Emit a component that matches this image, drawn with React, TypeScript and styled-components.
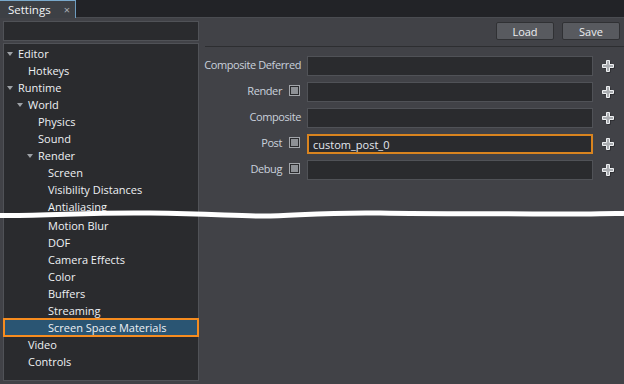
import React from "react";
import styled, { createGlobalStyle } from "styled-components";

const GlobalStyle = createGlobalStyle`
  html, body {
    margin: 0;
    padding: 0;
    background: #414247;
  }
  body {
    font-family: "Open Sans", "Noto Sans", "Liberation Sans", sans-serif;
    font-size: 11px;
    color: #e6e9ee;
  }
`;

type TreeItem = {
  label: string;
  level: number;
  open?: boolean;
  selected?: boolean;
  shifted?: boolean;
};

const tree: TreeItem[] = [
  { label: "Editor", level: 0, open: true },
  { label: "Hotkeys", level: 1 },
  { label: "Runtime", level: 0, open: true },
  { label: "World", level: 1, open: true },
  { label: "Physics", level: 2 },
  { label: "Sound", level: 2 },
  { label: "Render", level: 2, open: true },
  { label: "Screen", level: 3 },
  { label: "Visibility Distances", level: 3 },
  { label: "Antialiasing", level: 3 },
  { label: "Motion Blur", level: 3, shifted: true },
  { label: "DOF", level: 3 },
  { label: "Camera Effects", level: 3 },
  { label: "Color", level: 3 },
  { label: "Buffers", level: 3 },
  { label: "Streaming", level: 3 },
  { label: "Screen Space Materials", level: 3, selected: true },
  { label: "Video", level: 1 },
  { label: "Controls", level: 1 },
];

const fields = [
  { label: "Composite Deferred", check: false, value: "" },
  { label: "Render", check: true, value: "" },
  { label: "Composite", check: false, value: "" },
  { label: "Post", check: true, value: "custom_post_0", active: true },
  { label: "Debug", check: true, value: "" },
];

const Window = styled.div`
  position: relative;
  width: 624px;
  height: 384px;
  overflow: hidden;
  display: flex;
  flex-direction: column;
  background: #414247;
`;

const TabBar = styled.div`
  height: 17px;
  flex: none;
  display: flex;
  background: #222327;
  border-bottom: 1px solid #4a4c51;
`;

const Tab = styled.div`
  width: 76px;
  height: 18px;
  margin-bottom: -1px;
  box-sizing: border-box;
  padding: 0 0 0 8px;
  display: flex;
  align-items: center;
  justify-content: space-between;
  background: #3d4045;
  border-top: 1px solid #79a9cc;
  border-right: 1px solid #6d9cbf;
  color: #f2f4f7;
  font-size: 11.5px;
`;

const Close = styled.span`
  width: 16px;
  text-align: center;
  color: #a9adb3;
  font-size: 11px;
`;

const Body = styled.div`
  flex: 1;
  display: flex;
  min-height: 0;
`;

const Sidebar = styled.div`
  width: 200px;
  flex: none;
  box-sizing: border-box;
  padding: 3px 1px 3px 3px;
  display: flex;
  flex-direction: column;
  gap: 2px;
`;

const Search = styled.div`
  height: 20px;
  flex: none;
  box-sizing: border-box;
  background: #2a2b2e;
  border: 1px solid #505257;
`;

const Tree = styled.div`
  flex: 1;
  box-sizing: border-box;
  background: #2a2b2e;
  border: 1px solid #505257;
  padding-top: 1px;
`;

const Row = styled.div<{ $level: number; $selected?: boolean; $shifted?: boolean }>`
  height: 17px;
  display: flex;
  align-items: center;
  padding-left: ${(p) => 3 + p.$level * 10}px;
  margin-top: ${(p) => (p.$shifted ? 2 : 0)}px;
  color: #eef1f4;
  white-space: nowrap;
  background: ${(p) => (p.$selected ? "#2a5573" : "transparent")};
  outline: ${(p) => (p.$selected ? "2px solid #f68c1f" : "none")};
  outline-offset: -1px;
`;

const Toggle = styled.span<{ $open?: boolean }>`
  width: 11px;
  flex: none;
  display: flex;
  align-items: center;

  &::before {
    content: "";
    display: ${(p) => (p.$open ? "block" : "none")};
    width: 0;
    height: 0;
    border-left: 3px solid transparent;
    border-right: 3px solid transparent;
    border-top: 4px solid #9da1a6;
  }
`;

const Main = styled.div`
  flex: 1;
  display: flex;
  flex-direction: column;
  padding-left: 5px;
`;

const Toolbar = styled.div`
  display: flex;
  justify-content: flex-end;
  gap: 8px;
  padding: 4px 4px 6px 0;
  border-bottom: 1px solid #2d2e31;
`;

const Button = styled.button`
  width: 58px;
  height: 18px;
  padding: 0;
  border: 1px solid #303134;
  border-radius: 2px;
  background: #585a5f;
  color: #eceef1;
  font-family: inherit;
  font-size: 11px;
`;

const Form = styled.div`
  display: flex;
  flex-direction: column;
  gap: 6px;
  padding: 9px 9px 0 0;
`;

const Field = styled.div`
  display: flex;
  height: 20px;
`;

const Label = styled.div`
  width: 96px;
  margin-right: 6px;
  display: flex;
  justify-content: flex-end;
  align-items: flex-start;
  gap: 7px;
  line-height: 17px;
  letter-spacing: -0.4px;
  color: #c9d1dc;
  white-space: nowrap;
`;

const Check = styled.span`
  position: relative;
  flex: none;
  width: 11px;
  height: 11px;
  box-sizing: border-box;
  margin: 3px 1px 0 0;
  border: 1px solid #a2a5aa;
  background: #2a2b2e;

  &::after {
    content: "";
    position: absolute;
    inset: 1px;
    background: #8e9196;
  }
`;

const Input = styled.div<{ $active?: boolean }>`
  flex: 1;
  box-sizing: border-box;
  display: flex;
  align-items: center;
  padding-left: 4px;
  background: #2a2b2e;
  border: ${(p) => (p.$active ? "2px solid #d9841f" : "1px solid #505257")};
  color: #e4e8ee;
`;

const PlusSlot = styled.div`
  width: 22px;
  display: flex;
  justify-content: flex-end;
  align-items: center;
`;

const Break = styled.svg`
  position: absolute;
  left: 0;
  top: 204px;
  pointer-events: none;
`;

const Plus = () => (
  <svg width="13" height="13" viewBox="0 0 13 13">
    <path d="M5.5 1.5h3v4h4v3h-4v4h-3v-4h-4v-3h4z" fill="#1c1d20" />
    <path
      d="M4.5 0.5h3v4h4v3h-4v4h-3v-4h-4v-3h4z"
      fill="#a9acb0"
      stroke="#eef0f2"
      strokeWidth="1"
    />
  </svg>
);

export default function App() {
  return (
    <>
      <GlobalStyle />
      <Window>
        <TabBar>
          <Tab>
            Settings<Close>×</Close>
          </Tab>
        </TabBar>
        <Body>
          <Sidebar>
            <Search />
            <Tree>
              {tree.map((t) => (
                <Row key={t.label} $level={t.level} $selected={t.selected} $shifted={t.shifted}>
                  <Toggle $open={t.open} />
                  {t.label}
                </Row>
              ))}
            </Tree>
          </Sidebar>
          <Main>
            <Toolbar>
              <Button>Load</Button>
              <Button>Save</Button>
            </Toolbar>
            <Form>
              {fields.map((f) => (
                <Field key={f.label}>
                  <Label>
                    {f.label}
                    {f.check && <Check />}
                  </Label>
                  <Input $active={f.active}>{f.value}</Input>
                  <PlusSlot>
                    <Plus />
                  </PlusSlot>
                </Field>
              ))}
            </Form>
          </Main>
        </Body>
        <Break width="624" height="20" viewBox="0 0 624 20">
          <path
            d="M0 11.5 C50 12 90 8 150 9 S230 11.5 260 12 S320 8 380 9 S480 9.5 540 10 S600 9 624 9.5"
            fill="none"
            stroke="#ffffff"
            strokeWidth="5"
          />
        </Break>
      </Window>
    </>
  );
}
